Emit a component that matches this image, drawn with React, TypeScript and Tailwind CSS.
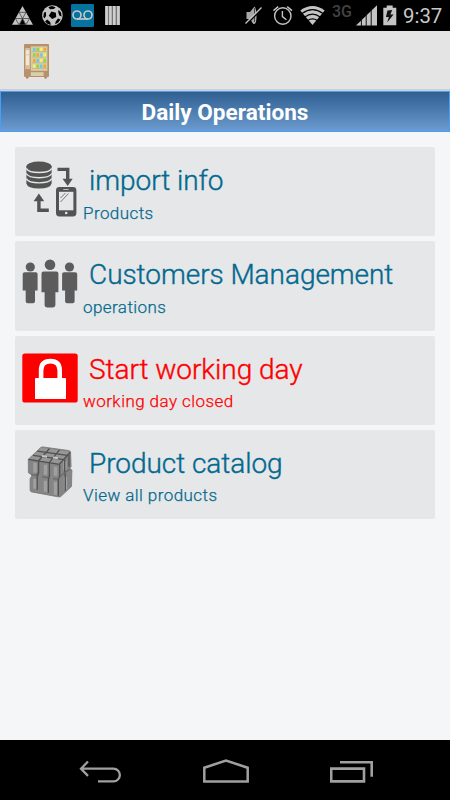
import clsx from 'clsx';
import type { ReactNode } from 'react';

type MenuItem = {
  title: string;
  subtitle: string;
  icon: ReactNode;
  isAlert?: boolean;
};

const StatusBar: React.FC = () => (
  <header className="bg-black flex h-[31px] items-center justify-between pl-3 pr-2 shrink-0">
    <div className="flex items-center">
      <svg className="h-[31px] w-[21px]" viewBox="12 0 21 31">
        <path d="M22.5 6 33 24.7H12Z" fill="#c4c4c4" />
        <path
          d="M19 12.3h7M15.4 18.5h14.2M19 12.3l3.5 6.2 3.5-6.2M15.4 18.5l3.6 6.2 3.5-6.2 3.5 6.2 3.6-6.2"
          fill="none"
          stroke="#333"
          strokeWidth=".7"
        />
        <path d="m22.5 18.7 3 6h-6Z" fill="#000" />
      </svg>
      <svg className="h-[31px] ml-[9px] w-[21px]" viewBox="42 0 21 31">
        <circle cx="52.4" cy="15.5" fill="#c4c4c4" r="10.3" />
        <path
          d="m51.4 11.4 4.5 1.3.3 4.3-4 2-3.4-3.2ZM48.3 7l4-1 3.4 1.4-1.9 1.7-3.8.2ZM58.4 9.8l2.6 2.8.6 4-2.3-1.2-1-3ZM58 18.6l2.5 1-2.4 3.2-3 1.4.6-2.8ZM47.2 19.6l3 2.5.6 2.8-3.5-1.1-2.3-2.3ZM44 12.4l1.9-.3.2 3.8-1.8 2.6-1-2Z"
          fill="#000"
        />
      </svg>
      <svg className="h-[31px] ml-2 w-[23px]" viewBox="71 0 23 31">
        <rect fill="#04739f" height="23" rx="1.2" width="23" x="71" y="4" />
        <g fill="none" stroke="#c6c6c6" strokeWidth="1.7">
          <circle cx="77" cy="15" r="4" />
          <circle cx="88" cy="15" r="4" />
          <path d="M77 19h11" />
        </g>
      </svg>
      <svg className="h-[31px] ml-[11px] w-[15px]" viewBox="105 0 15 31">
        <path d="M105 6h15v19h-15Z" fill="#777" />
        <path d="M106.6 6v19M110.4 6v19M114.3 6v19M118.4 6v19" stroke="#cfcfcf" strokeWidth="2.6" />
      </svg>
    </div>
    <div className="flex items-center">
      <svg className="h-[31px] w-[18px]" viewBox="245 0 18 31">
        <path d="M246.5 12h3.5l4.5-5.5q1.8 2 2 9t-2 8.6h-1.2l-3.3-5h-3.5Z" fill="#a8a8a8" />
        <path d="M254.5 8v14" stroke="#444" strokeWidth="1" />
        <path d="M247 24 262 8.5" stroke="#000" strokeWidth="1.6" />
        <path d="M245.5 23.5 261.5 7.5" stroke="#c4c4c4" strokeWidth="1.3" />
      </svg>
      <svg className="h-[31px] ml-2.5 w-5" viewBox="273 0 20 31">
        <g fill="none" stroke="#c4c4c4" strokeWidth="1.4">
          <circle cx="282.8" cy="16" r="8.2" />
          <path d="M282.4 11v5.6l4 3.2M273.4 10.6l4.8-4M292 10.6l-4.8-4" />
        </g>
      </svg>
      <svg className="h-[31px] ml-[7px] w-[25px]" viewBox="300 0 25 31">
        <path d="M300.3 10.6Q306 6 312.5 6t12.2 4.6L312.5 25Z" fill="#c4c4c4" />
        <path
          d="M302 13.4q10.5-7.5 21 0M304.8 17q7.7-5.6 15.4 0M307.7 20.4q4.8-3.2 9.6 0"
          fill="none"
          stroke="#000"
          strokeWidth="1.2"
        />
      </svg>
      <span className="font-medium leading-none mb-[7px] ml-[7px] text-[#424242] text-[16px] w-[20px]">
        3G
      </span>
      <svg className="h-[31px] ml-1 w-[21px]" viewBox="356 0 21 31">
        <path d="m356 25.4 21-20.2v20.2Z" fill="#c4c4c4" />
        <path d="M361.4 18v8M366.2 12v14M371.2 8v18" stroke="#111" strokeWidth="1" />
      </svg>
      <svg className="h-[31px] ml-1.5 w-[14px]" viewBox="383 0 14 31">
        <path d="M383.3 7.8h3.4V5.4h6v2.4h3.6v17.5h-13Z" fill="#c4c4c4" />
        <path d="m387.5 10.5 4.7-.4-1.8 4.3h3.2l-6.4 8 1.6-5.4h-2.9Z" fill="#111" />
      </svg>
      <span className="leading-none ml-[6px] pt-px text-[#c8c8c8] text-[20.4px] w-[39px]">
        9:37
      </span>
    </div>
  </header>
);

const SNACK_ROWS = [
  ['#65cbea', '#8ed83b', '#f4ef6c', '#f5a62d'],
  ['#8ed83b', '#f5a62d', '#65cbea', '#f4ef6c'],
  ['#f5a62d', '#65cbea', '#f4ef6c', '#8ed83b'],
  ['#f4ef6c', '#8ed83b', '#65cbea', '#f5a62d'],
];

const VendingMachineIcon: React.FC = () => (
  <svg className="h-[36px] w-[26px]" viewBox="23 43 26 36">
    <path d="M26 76h2.4v2.6H26ZM44.4 76h2.4v2.6h-2.4Z" fill="#a58063" />
    <rect fill="#b8906c" height="33" rx="1" width="25" x="24" y="44" />
    <path d="M30.8 46.3h16.6v24.5H30.8Z" fill="#d8cca4" />
    <path d="M25.2 48h4.8v21.2h-4.8Z" fill="#d3bea0" />
    <path d="M25.8 50.2h3.4v15h-3.4Z" fill="#efe6d4" />
    <path d="M25.8 54.8h3.4" stroke="#d3bea0" strokeWidth=".7" />
    <path d="M30.8 72.2h12.8v3.8H30.8Z" fill="#d9cfaa" />
    <path d="M32 51.6h14.6M32 57.1h14.6M32 62.7h14.6M32 68.3h14.6" stroke="#b5aa86" strokeWidth=".6" />
    {SNACK_ROWS.map((row, rowIndex) =>
      row.map((fill, columnIndex) => (
        <rect
          fill={fill}
          height="3.2"
          key={columnIndex}
          width="2.5"
          x={33 + columnIndex * 3.5}
          y={47.8 + rowIndex * 5.6}
        />
      )),
    )}
  </svg>
);

const ImportIcon: React.FC = () => (
  <svg className="h-[60px] w-[56px]" viewBox="22 158 56 60">
    <g fill="#535353">
      <path d="M26.4 166.5v17q1 5 12.6 5t12.6-5v-17Z" />
      <ellipse cx="39" cy="166.3" rx="12.6" ry="4.7" />
    </g>
    <path
      d="M26.2 168.3q2.5 4.2 12.8 4.2t12.8-4.2M26.2 173.5q2.5 4.2 12.8 4.2t12.8-4.2M26.2 178.7q2.5 4.2 12.8 4.2t12.8-4.2"
      fill="none"
      stroke="#e6e7e8"
      strokeWidth="1.4"
    />
    <g fill="none" stroke="#535353" strokeWidth="3.4">
      <path d="M57.5 169.4h10.2v10M48.8 210.3h-9.9v-10" />
    </g>
    <path d="M62.5 178.7h10.2l-5 7.4ZM33.6 201.3h10.6l-5.3-7.8Z" fill="#535353" />
    <rect fill="#535353" height="29.4" rx="3.4" width="20.4" x="56" y="187" />
    <path d="M59 191.8h14.4v18.5H59Z" fill="#e6e7e8" />
    <path d="M63.3 189.5h5.4" stroke="#bbb" strokeWidth="1" />
    <circle cx="66.2" cy="213" fill="#e6e7e8" r="1.3" />
    <path d="m60.5 198 5-5M60.5 202l8-8.5" stroke="#777" strokeWidth="1" />
  </svg>
);

const CustomersIcon: React.FC = () => (
  <svg className="h-[60px] w-[56px]" viewBox="22 252.3 56 60">
    <g fill="#5c5c5c">
      <circle cx="30.3" cy="267.3" r="4.6" />
      <circle cx="50" cy="265" r="5.3" />
      <circle cx="69.5" cy="267.3" r="4.6" />
      <path d="M24.8 272.6h11q1.8 0 1.8 1.8v16.4h-2.6v10.8q0 2-2 2h-5.3q-2 0-2-2v-10.8h-3v-16.4q0-1.8 2.1-1.8ZM64 272.6h11.2q2 0 2 1.8v16.4h-2.6v10.8q0 2-2 2h-5.5q-2 0-2-2v-10.8h-3v-16.4q0-1.8 1.9-1.8ZM43.6 271.8h12.8q2 0 2 2v18.7h-3v12.8q0 2.4-2.4 2.4h-6q-2.4 0-2.4-2.4v-12.8h-3.1v-18.7q0-2 2.1-2Z" />
    </g>
  </svg>
);

const LockIcon: React.FC = () => (
  <svg className="h-[60px] w-[56px]" viewBox="22 347 56 60">
    <rect fill="#f00" height="49" rx="2.6" width="55.4" x="22.3" y="353.6" />
    <path d="M41.1 379v-8.5q0-9.4 9.3-9.4t9.3 9.4v8.5" fill="none" stroke="#fff" strokeWidth="4.6" />
    <rect fill="#fff" height="21" rx=".6" width="31" x="35" y="378" />
  </svg>
);

const CatalogIcon: React.FC = () => (
  <svg className="h-[60px] w-[56px]" viewBox="22 441.2 56 60">
    <path
      d="m28.3 459.5 12.4-11.8q1-.7 2.4-.5l25.5 3.5q2 .3 2 2l.5 14 -1.2 2 2 1.5-.4 16.4-10.4 9.8q-1 1-2.5.7l-27-5q-1.5-.4-1.5-1.8v-11.3l2-3.5-3.7-2.6Z"
      fill="#858585"
      stroke="#777"
      strokeWidth=".8"
    />
    <path d="m29 459 12-11 28.5 4-9.5 12.5Z" fill="#969696" />
    <path
      d="M35 463v10M45.5 465v10M55.5 467v9M35 479v10M45.5 481v11M55.5 482v13M65 461v9M65.5 477v13"
      stroke="#a0a0a0"
      strokeWidth="3.4"
    />
    <g fill="none" stroke="#505050" strokeWidth="1.3">
      <path d="m28.5 459.5 30.8 5 11-12M33 455.5l31 4.3M37.3 451.3l30 4.3M38.6 461l10.8-12M49 463l10.5-13" />
      <path d="M38.6 461v12l-1.4 4v13M49.4 463v13l-1 4v13M59.7 465v11l-1.4 4v16M64.7 460v13l.6 3v15M69 455v12" />
    </g>
    <path
      d="m31 474.8 5.1.8 2-3M42 476.8l5.4 1.2 1.5-2.6M53 478.8l4.7.6 6-6 6.3-4"
      fill="none"
      stroke="#686868"
      strokeWidth="1.1"
    />
    <path d="m42 456.3 5 .6M53 457.8l5 .6" stroke="#c6c6c6" strokeWidth="2" />
  </svg>
);

const MENU_ITEMS: MenuItem[] = [
  { title: 'import info', subtitle: 'Products', icon: <ImportIcon /> },
  { title: 'Customers Management', subtitle: 'operations', icon: <CustomersIcon /> },
  {
    title: 'Start working day',
    subtitle: 'working day closed',
    icon: <LockIcon />,
    isAlert: true,
  },
  { title: 'Product catalog', subtitle: 'View all products', icon: <CatalogIcon /> },
];

const MenuCard: React.FC<MenuItem> = ({ title, subtitle, icon, isAlert = false }) => (
  <button
    className={clsx(
      'bg-[#e6e7e8] flex font-light h-[89.3px] items-start pl-[7px] pt-[11px] rounded-[2px] text-left w-full',
      isAlert ? 'text-[#ff0000]' : 'text-[#04698f]',
    )}
    type="button"
  >
    {icon}
    <span className="flex flex-col pl-[5px] pt-[5px]">
      <span className="[-webkit-text-stroke:0.4px] leading-9 pl-1.5 text-[28px] tracking-[-0.05px] whitespace-nowrap">
        {title}
      </span>
      <span className="[-webkit-text-stroke:0.25px] leading-6 mt-[1.5px] text-[17px] tracking-[0.43px] whitespace-nowrap">
        {subtitle}
      </span>
    </span>
  </button>
);

const NavigationBar: React.FC = () => (
  <nav className="bg-black flex h-[60px] items-center justify-between pl-[79px] pr-[77px] shrink-0">
    <svg className="h-[60px] w-[43px]" viewBox="79 740 43 60">
      <path
        d="M88 761.5 81 768.7l7 7.2M81 768.7h32.5a6.3 6.3 0 0 1 0 12.7H98"
        fill="none"
        stroke="#a0a0a0"
        strokeWidth="2.3"
      />
    </svg>
    <svg className="h-[60px] w-[46px]" viewBox="202 740 46 60">
      <path d="m203.3 767.7 21.7-7.2 21.7 7.2v13.8h-43.4Z" fill="none" stroke="#a0a0a0" strokeWidth="2.5" />
    </svg>
    <svg className="h-[60px] w-[43px]" viewBox="330 740 43 60">
      <path
        d="M331.2 768.6H364v12.8h-32.8ZM340 762.3h31.7v14.4"
        fill="none"
        stroke="#a0a0a0"
        strokeWidth="2.6"
      />
    </svg>
  </nav>
);

export default function App() {
  return (
    <div className="bg-[#f5f6f8] flex flex-col font-['Roboto',sans-serif] h-[800px] overflow-hidden w-[450px]">
      <StatusBar />
      <div className="bg-[#e4e4e4] border-[#cfcfcf] border-b-2 flex h-[60px] items-start pl-[23px] pt-3 shrink-0">
        <VendingMachineIcon />
      </div>
      <h1 className="bg-linear-to-b border border-[#4a9df8] flex font-bold from-[#2f6092] h-[41px] items-center justify-center leading-none pt-[3px] shrink-0 text-[22.6px] text-white to-[#6c9ccf]">
        Daily Operations
      </h1>
      <main className="flex flex-1 flex-col gap-[5px] pt-[15px] px-[15px]">
        {MENU_ITEMS.map(item => (
          <MenuCard key={item.title} {...item} />
        ))}
      </main>
      <NavigationBar />
    </div>
  );
}
